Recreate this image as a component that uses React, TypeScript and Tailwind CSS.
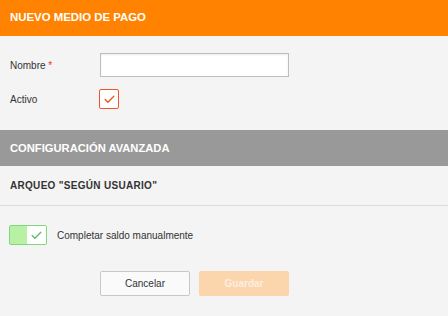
import { Check } from 'lucide-react';

export default function App() {
  return (
    <div className="w-[448px] h-[316px] bg-[#f4f4f4] font-['Liberation_Sans',Arial,sans-serif] text-[10px] text-[#333] overflow-hidden">
      <div className="h-[36px] bg-[#ff8300] flex items-center px-[10px]">
        <h1 className="text-white font-bold text-[11.4px]">NUEVO MEDIO DE PAGO</h1>
      </div>

      <div className="pt-[17px]">
        <div className="flex items-center h-[24px]">
          <label className="w-[100px] pl-[10px]">
            Nombre <span className="text-[#e0312b]">*</span>
          </label>
          <input
            type="text"
            className="w-[189px] h-[24px] bg-white border border-[#bdbdbd] shadow-[inset_0_1px_2px_rgba(0,0,0,0.08)] outline-none px-2"
          />
        </div>
        <div className="flex items-center h-[20px] mt-[12px]">
          <label className="w-[99px] pl-[10px]">Activo</label>
          <div className="w-[20px] h-[20px] bg-white border border-[#f0542a] rounded-[2px] flex items-center justify-center">
            <Check className="w-[13px] h-[13px] text-[#f0542a]" strokeWidth={2.5} />
          </div>
        </div>
      </div>

      <div className="h-[36px] bg-[#999999] flex items-center px-[10px] mt-[21px]">
        <h2 className="text-white font-bold text-[11.2px]">CONFIGURACIÓN AVANZADA</h2>
      </div>

      <div className="h-[40px] flex items-center px-[10px] border-b border-[#dcdcdc]">
        <h3 className="font-bold text-[10px] text-[#333] tracking-[0.3px]">ARQUEO "SEGÚN USUARIO"</h3>
      </div>

      <div className="flex items-center mt-[19px] pl-[9px]">
        <div className="w-[38px] h-[20px] rounded-[2px] border border-[#7fd77b] bg-[#b8f0a6] flex justify-end">
          <div className="w-[19px] h-full bg-white rounded-[1px] flex items-center justify-center">
            <Check className="w-[13px] h-[13px] text-[#5cbf6a]" strokeWidth={2.5} />
          </div>
        </div>
        <span className="ml-[10px]">Completar saldo manualmente</span>
      </div>

      <div className="flex gap-[9px] mt-[26px] pl-[100px]">
        <button className="w-[90px] h-[25px] bg-[#fafafa] border border-[#c8c8c8] rounded-[2px] text-[#333]">
          Cancelar
        </button>
        <button className="w-[90px] h-[25px] bg-[#fbd5ab] rounded-[2px] text-[#fdeee0] font-bold">
          Guardar
        </button>
      </div>
    </div>
  );
}
